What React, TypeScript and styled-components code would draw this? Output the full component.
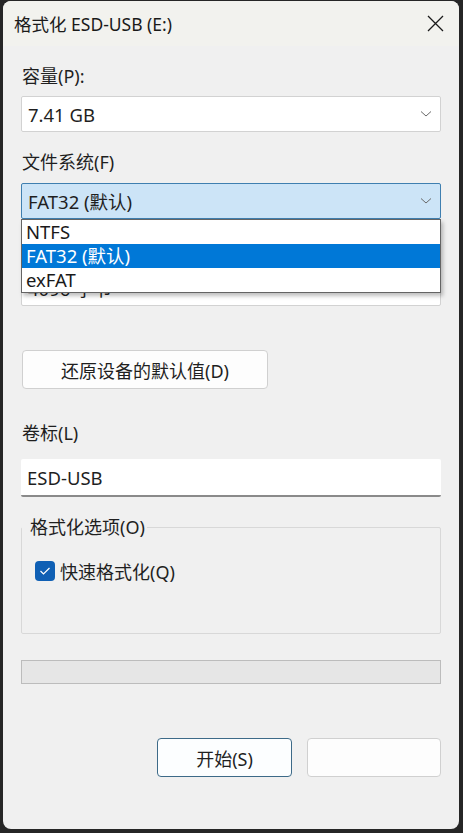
import * as React from 'react';
import styled, { createGlobalStyle } from 'styled-components';

const GlobalStyle = createGlobalStyle`
  html, body {
    margin: 0;
    padding: 0;
    background: #262626;
  }
  body {
    font-family: "Noto Sans", "Noto Sans CJK SC", sans-serif;
    color: #1f1f1f;
  }
`;

const Window = styled.div`
  box-sizing: border-box;
  width: 456px;
  height: 828px;
  margin: 1px 0 0 3px;
  background: #f0f0f0;
  border-radius: 8px;
  overflow: hidden;
  display: flex;
  flex-direction: column;
`;

const TitleBar = styled.div`
  height: 45px;
  display: flex;
  align-items: center;
  justify-content: space-between;
  padding: 0 12px 0 11px;
  background: #f2f2ee;
`;

const Title = styled.div`
  font-size: 17.5px;
  color: #1a1a1a;
`;

const CloseButton = styled.div`
  width: 24px;
  height: 24px;
  display: flex;
  align-items: center;
  justify-content: center;
`;

const Body = styled.div`
  display: flex;
  flex-direction: column;
  padding: 0 18px;
`;

const Label = styled.div<{ $top: number }>`
  margin-top: ${p => p.$top}px;
  height: 22px;
  line-height: 22px;
  font-size: 18px;
  color: #1f1f1f;
  padding-left: 1px;
  white-space: nowrap;
`;

const SelectWrap = styled.div<{ $top: number }>`
  position: relative;
  margin-top: ${p => p.$top}px;
`;

const SelectBox = styled.div<{ $focused?: boolean }>`
  box-sizing: border-box;
  height: 36px;
  display: flex;
  align-items: center;
  justify-content: space-between;
  padding: 0 8px 0 6px;
  font-size: 18.5px;
  background: ${p => (p.$focused ? '#cce4f7' : '#ffffff')};
  border: 1px solid ${p => (p.$focused ? '#3f7fb0' : '#d2d2d2')};
  border-radius: 2px;
  color: #1f1f1f;
`;

const DropList = styled.div`
  position: absolute;
  left: 0;
  right: 0;
  top: 100%;
  box-sizing: border-box;
  background: #ffffff;
  border: 1px solid #646464;
  box-shadow: 2px 3px 4px rgba(0, 0, 0, 0.25);
  z-index: 5;
`;

const DropItem = styled.div<{ $selected?: boolean }>`
  height: 24px;
  line-height: 24px;
  padding-left: 4px;
  font-size: 18.5px;
  background: ${p => (p.$selected ? '#0078d7' : 'transparent')};
  color: ${p => (p.$selected ? '#ffffff' : '#1a1a1a')};
`;

const PlainButton = styled.div<{ $width: number; $default?: boolean }>`
  box-sizing: border-box;
  width: ${p => p.$width}px;
  height: 39px;
  display: flex;
  align-items: center;
  justify-content: center;
  font-size: 18px;
  background: ${p => (p.$default ? '#fcfeff' : '#fdfdfd')};
  border: 1px solid ${p => (p.$default ? '#3d6a88' : '#d0d0d0')};
  border-radius: 4px;
  color: #1f1f1f;
`;

const ResetRow = styled.div`
  margin-top: 44px;
  padding-left: 1px;
`;

const TextInput = styled.div`
  box-sizing: border-box;
  margin-top: 15px;
  height: 38px;
  display: flex;
  align-items: center;
  padding-left: 6px;
  font-size: 18.5px;
  background: #ffffff;
  border-bottom: 2px solid #8a8a8a;
  border-radius: 2px;
`;

const Group = styled.fieldset`
  margin: 19px 0 0;
  padding: 0 0 0 13px;
  height: 118px;
  box-sizing: border-box;
  border: 1px solid #d8d8d8;
  border-radius: 2px;
  min-width: 0;
`;

const Legend = styled.legend`
  padding: 0 2px 0 8px;
  margin-left: -13px;
  font-size: 18px;
  line-height: 22px;
  color: #1f1f1f;
`;

const CheckRow = styled.div`
  margin-top: 20px;
  display: flex;
  align-items: center;
  gap: 5px;
  font-size: 18px;
`;

const CheckBox = styled.div`
  width: 20px;
  height: 20px;
  border-radius: 4px;
  background: #0f5fb4;
  display: flex;
  align-items: center;
  justify-content: center;
`;

const Progress = styled.div`
  margin-top: 26px;
  height: 24px;
  box-sizing: border-box;
  background: #e6e6e6;
  border: 1px solid #bcbcbc;
`;

const ButtonRow = styled.div`
  margin-top: 54px;
  display: flex;
  justify-content: flex-end;
  gap: 15px;
`;

const Chevron = () => (
  <svg width="12" height="8" viewBox="0 0 12 8">
    <path d="M1 1.5 L6 6 L11 1.5" fill="none" stroke="#6a6a6a" strokeWidth="1" />
  </svg>
);

export default function App() {
  return (
    <>
      <GlobalStyle />
      <Window>
        <TitleBar>
          <Title>格式化 ESD-USB (E:)</Title>
          <CloseButton>
            <svg width="17" height="17" viewBox="0 0 17 17">
              <path d="M1 1 L16 16 M16 1 L1 16" stroke="#1a1a1a" strokeWidth="1.3" />
            </svg>
          </CloseButton>
        </TitleBar>
        <Body>
          <Label $top={19}>容量(P):</Label>
          <SelectWrap $top={9}>
            <SelectBox>
              <span>7.41 GB</span>
              <Chevron />
            </SelectBox>
          </SelectWrap>

          <Label $top={19}>文件系统(F)</Label>
          <SelectWrap $top={10}>
            <SelectBox $focused>
              <span>FAT32 (默认)</span>
              <Chevron />
            </SelectBox>
            <DropList>
              <DropItem>NTFS</DropItem>
              <DropItem $selected>FAT32 (默认)</DropItem>
              <DropItem>exFAT</DropItem>
            </DropList>
          </SelectWrap>

          {/* label of the allocation-size box sits fully under the open list */}
          <Label $top={19} />
          <SelectWrap $top={10}>
            <SelectBox>
              <span>4096 字节</span>
              <Chevron />
            </SelectBox>
          </SelectWrap>

          <ResetRow>
            <PlainButton $width={246}>还原设备的默认值(D)</PlainButton>
          </ResetRow>

          <Label $top={33}>卷标(L)</Label>
          <TextInput>ESD-USB</TextInput>

          <Group>
            <Legend>格式化选项(O)</Legend>
            <CheckRow>
              <CheckBox>
                <svg width="12" height="10" viewBox="0 0 12 10">
                  <path d="M1.5 5 L4.5 8 L10.5 2" fill="none" stroke="#ffffff" strokeWidth="1.2" />
                </svg>
              </CheckBox>
              <span>快速格式化(Q)</span>
            </CheckRow>
          </Group>

          <Progress />

          <ButtonRow>
            <PlainButton $width={135} $default>开始(S)</PlainButton>
            <PlainButton $width={134}></PlainButton>
          </ButtonRow>
        </Body>
      </Window>
    </>
  );
}
